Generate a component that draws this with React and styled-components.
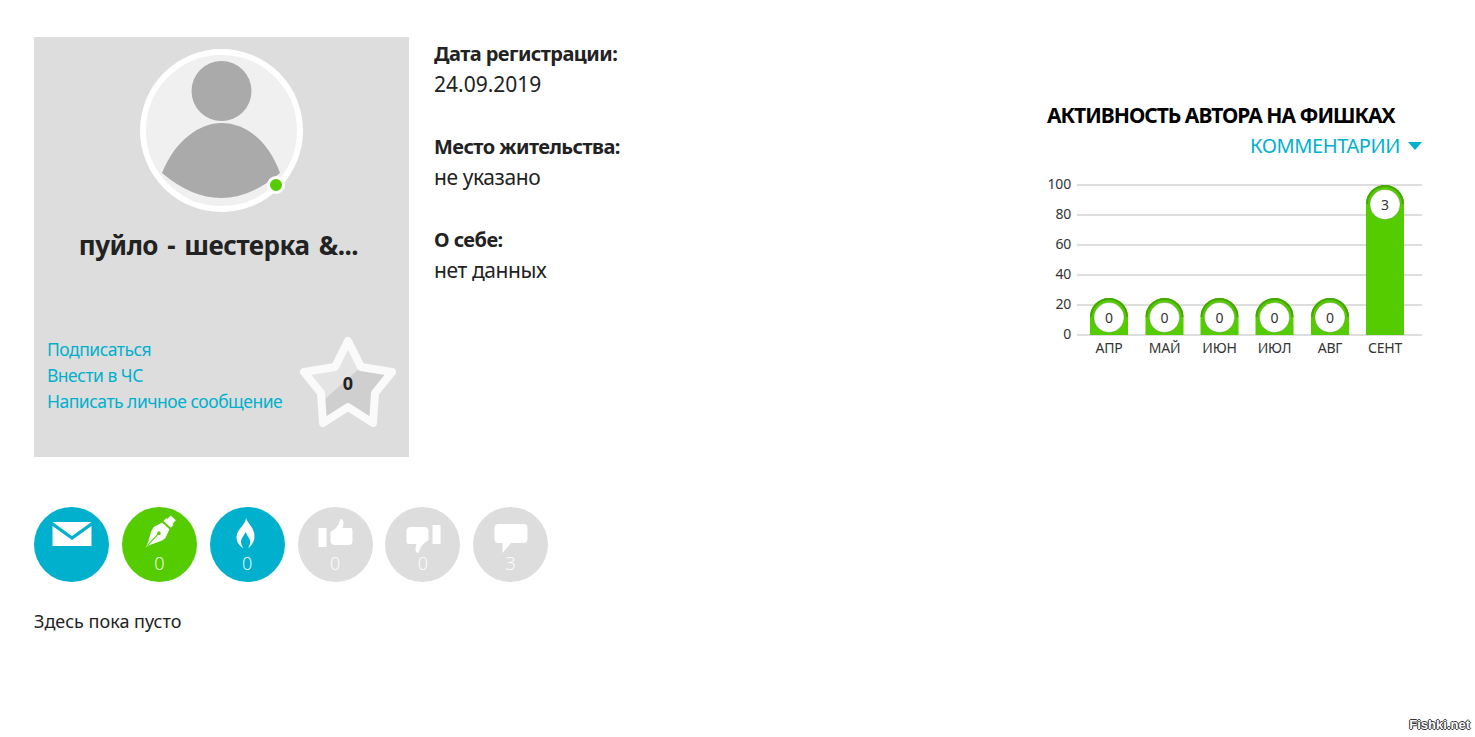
import React from 'react';
import styled, { createGlobalStyle } from 'styled-components';

const GlobalStyle = createGlobalStyle`
  html, body {
    margin: 0;
    padding: 0;
    background: #fff;
    overflow: hidden;
  }
  body {
    font-family: 'Noto Sans', 'Open Sans', sans-serif;
    color: #222;
  }
`;

const Page = styled.div`
  position: relative;
  box-sizing: border-box;
  height: 737px;
  padding: 37px 53px 0 34px;
`;

const TopRow = styled.div`
  display: flex;
  align-items: flex-start;
`;

const ProfileCard = styled.div`
  box-sizing: border-box;
  width: 375px;
  height: 420px;
  padding: 12px 13px 0;
  background: #ddd;
  display: flex;
  flex-direction: column;
  align-items: center;
`;

const Avatar = styled.div`
  position: relative;
  width: 163px;
  height: 163px;
  svg {
    display: block;
  }
`;

const OnlineDot = styled.span`
  position: absolute;
  right: 18px;
  bottom: 18px;
  width: 12px;
  height: 12px;
  border-radius: 50%;
  background: #55cc00;
  border: 3px solid #fff;
`;

const UserName = styled.h1`
  margin: 15px 6px 0 0;
  font-size: 26px;
  line-height: 36px;
  font-weight: 700;
  letter-spacing: -0.5px;
  word-spacing: 3px;
  color: #222;
  white-space: nowrap;
`;

const CardFooter = styled.div`
  align-self: stretch;
  margin-top: 57px;
  display: flex;
  justify-content: space-between;
`;

const LinkList = styled.div`
  display: flex;
  flex-direction: column;
  padding-top: 16px;
`;

const ProfileLink = styled.a`
  font-size: 17.5px;
  line-height: 26px;
  letter-spacing: -0.5px;
  color: #00b0cc;
  text-decoration: none;
  white-space: nowrap;
`;

const Rating = styled.div`
  position: relative;
  width: 100px;
  height: 96px;
  margin: 15px -2px 0 0;
  svg {
    display: block;
  }
`;

const RatingValue = styled.span`
  position: absolute;
  left: 0;
  right: 0;
  top: 36px;
  text-align: center;
  font-size: 18px;
  line-height: 24px;
  font-weight: 700;
  color: #222;
`;

const InfoColumn = styled.div`
  margin-left: 25px;
  padding-top: 1px;
`;

const InfoBlock = styled.div`
  margin-bottom: 31px;
`;

const InfoLabel = styled.div`
  font-size: 20px;
  line-height: 31px;
  font-weight: 700;
  letter-spacing: -0.55px;
  color: #222;
`;

const InfoValue = styled.div`
  font-size: 21px;
  line-height: 31px;
  letter-spacing: ${p => p.$spacing || '-0.4px'};
  color: #222;
`;

const Activity = styled.div`
  margin-left: auto;
  margin-top: 63px;
  width: 375px;
`;

const ActivityTitle = styled.h2`
  margin: 0;
  font-size: 21px;
  line-height: 30px;
  font-weight: 700;
  letter-spacing: -1px;
  color: #000;
  white-space: nowrap;
`;

const ChartSwitch = styled.div`
  display: flex;
  justify-content: flex-end;
  align-items: center;
  gap: 8px;
  height: 30px;
  font-size: 20px;
  letter-spacing: -0.4px;
  color: #00b0cc;
`;

const Caret = styled.span`
  width: 0;
  height: 0;
  border-left: 7px solid transparent;
  border-right: 7px solid transparent;
  border-top: 8px solid #00b0cc;
  margin-top: 2px;
`;

const ChartSvg = styled.svg`
  display: block;
  margin-top: 15px;
  text {
    font-family: 'Noto Sans', sans-serif;
    font-size: 14px;
    fill: #333;
    letter-spacing: -0.2px;
  }
`;

const Badges = styled.div`
  display: flex;
  gap: 12.85px;
  margin-top: 50px;
`;

const Badge = styled.div`
  box-sizing: border-box;
  width: 75px;
  height: 75px;
  padding-top: 8px;
  border-radius: 50%;
  background: ${p => p.$bg};
  display: flex;
  flex-direction: column;
  align-items: center;
  color: #fff;
  svg {
    display: block;
    flex: none;
  }
`;

const BadgeCount = styled.span`
  font-family: 'Open Sans', sans-serif;
  font-weight: 300;
  font-size: 18px;
  line-height: 20px;
`;

const EmptyNote = styled.p`
  margin: 26px 0 0;
  font-size: 18px;
  line-height: 26px;
  color: #222;
`;

const Watermark = styled.div`
  position: absolute;
  right: 5px;
  bottom: 5px;
  font-family: 'Liberation Sans', sans-serif;
  font-size: 13px;
  line-height: 14px;
  font-weight: 700;
  color: #fff;
  text-shadow: 1px 0 0 #333, -1px 0 0 #333, 0 1px 0 #333, 0 -1px 0 #333;
`;

const TEAL = '#00b0cc';
const GREEN = '#55cc00';
const GREY = '#ddd';

const STAR = '348,341 361,367 392,372 375,393 373,423 348,407 323,423 321,393 304,372 335,367';

const BadgeIcon = ({ children, bg }) => (
  <svg width="40" height="38" viewBox="-20 0 40 38" fill="#fff" style={{ color: bg }}>
    {children}
  </svg>
);

const badges = [
  {
    bg: TEAL,
    icon: (
      <>
        <path d="M-19.5 7H19.5L0 21Z" />
        <path d="M-19.5 11L0 25L19.5 11V31H-19.5Z" />
      </>
    ),
  },
  {
    bg: GREEN,
    count: 0,
    icon: (
      <g transform="translate(2 16) rotate(43)">
        <path d="M0 22C-1 16 -8 8 -8 2L-5 -7H5L8 2C8 8 1 16 0 22Z" />
        <path d="M-5 -9H5V-13H3.5V-18H-3.5V-13H-5Z" />
        <path d="M0 20V4" stroke="currentColor" strokeWidth="1" />
        <circle cx="0" cy="3" r="1.8" fill="currentColor" />
      </g>
    ),
  },
  {
    bg: TEAL,
    count: 0,
    icon: (
      <path d="M-1 3C1 9 7.5 13 7.5 21C7.5 27 4 31 1 33C3 30 4 27 2.5 24C1.5 22 0 20 -1.5 17C-2.5 20 -6 23 -6 27C-6 29 -5 31 -3.5 33C-7.5 31 -10.5 27 -10.5 22C-10.5 14 -1 10 -1 3Z" />
    ),
  },
  {
    bg: GREY,
    count: 0,
    icon: (
      <>
        <rect x="-16.5" y="13" width="8" height="19" />
        <path d="M-4.5 17C-1.5 15 1.5 13 3.5 9L5.5 4C8.5 4 8.5 7 8.5 9L7.5 13H15.5C17.5 13 17.5 15 17.5 17V26C17.5 29 15.5 30 13.5 30H0.5C-2.5 30 -4.5 29 -4.5 26Z" />
      </>
    ),
  },
  {
    bg: GREY,
    count: 0,
    icon: (
      <g transform="rotate(180 0.5 21)">
        <rect x="-16.5" y="13" width="8" height="19" />
        <path d="M-4.5 17C-1.5 15 1.5 13 3.5 9L5.5 4C8.5 4 8.5 7 8.5 9L7.5 13H15.5C17.5 13 17.5 15 17.5 17V26C17.5 29 15.5 30 13.5 30H0.5C-2.5 30 -4.5 29 -4.5 26Z" />
      </g>
    ),
  },
  {
    bg: GREY,
    count: 3,
    icon: (
      <path d="M-12.5 9H12.5C15 9 16.5 10.5 16.5 13V24C16.5 26.5 15 28 12.5 28H0L-8.5 38V28H-12.5C-15 28 -16.5 26.5 -16.5 24V13C-16.5 10.5 -15 9 -12.5 9Z" />
    ),
  },
];

// chart coordinates are relative to the svg: x = page x - 1047, y = page y - 175
const gridLines = [100, 80, 60, 40, 20, 0];
const months = [
  { label: 'АПР', x: 62, value: 0 },
  { label: 'МАЙ', x: 117.5, value: 0 },
  { label: 'ИЮН', x: 172.5, value: 0 },
  { label: 'ИЮЛ', x: 227.5, value: 0 },
  { label: 'АВГ', x: 283, value: 0 },
  { label: 'СЕНТ', x: 338, value: 3, top: 10 },
];

const Bar = ({ x, value, top = 123 }) => (
  <g>
    <path d={`M${x - 19} 160V${top + 19}A19 19 0 0 1 ${x + 19} ${top + 19}V160Z`} fill={GREEN} />
    <path
      d={`M${x - 18} ${top + 19}A18 18 0 0 1 ${x + 18} ${top + 19}`}
      fill="none"
      stroke="#46a600"
      strokeWidth="2"
    />
    <circle cx={x} cy={top + 19.5} r="15" fill="#fff" stroke="rgba(0,0,0,0.15)" strokeWidth="1" />
    <text x={x} y={top + 24.5} textAnchor="middle">
      {value}
    </text>
  </g>
);

const ActivityChart = () => (
  <ChartSvg width="375" height="185" viewBox="0 0 375 185">
    {gridLines.map((v, i) => (
      <g key={v}>
        <rect x="30" y={9 + i * 30} width="345" height="2" fill="#ddd" />
        <text x="24" y={14 + i * 30} textAnchor="end">
          {v}
        </text>
      </g>
    ))}
    {months.map(m => (
      <g key={m.label}>
        <Bar x={m.x} value={m.value} top={m.top} />
        <text x={m.x} y={178} textAnchor="middle">
          {m.label}
        </text>
      </g>
    ))}
  </ChartSvg>
);

export default function App() {
  return (
    <Page>
      <GlobalStyle />
      <TopRow>
        <ProfileCard>
          <Avatar>
            <svg width="163" height="163" viewBox="0 0 163 163">
              <circle cx="81.5" cy="81.5" r="78.5" fill="#f0f0f0" stroke="#fff" strokeWidth="6" />
              <circle cx="81.5" cy="42" r="30" fill="#aaa" />
              <path d="M22 124C35 91 60 74 81.5 74C105 74 128 91 140 124Q81 174 22 124Z" fill="#aaa" />
            </svg>
            <OnlineDot />
          </Avatar>
          <UserName>пуйло - шестерка &amp;...</UserName>
          <CardFooter>
            <LinkList>
              <ProfileLink href="#">Подписаться</ProfileLink>
              <ProfileLink href="#">Внести в ЧС</ProfileLink>
              <ProfileLink href="#">Написать личное сообщение</ProfileLink>
            </LinkList>
            <Rating>
              <svg width="100" height="96" viewBox="298 335 100 96">
                <polygon points={STAR} fill="#e4e4e4" />
                <polygon points="361,367 392,372 375,393 373,423 348,407 323,423 321.6,402" fill="#cfcfcf" />
                <polygon points={STAR} fill="none" stroke="#fafafa" strokeWidth="8" strokeLinejoin="round" />
              </svg>
              <RatingValue>0</RatingValue>
            </Rating>
          </CardFooter>
        </ProfileCard>
        <InfoColumn>
          <InfoBlock>
            <InfoLabel>Дата регистрации:</InfoLabel>
            <InfoValue $spacing="0">24.09.2019</InfoValue>
          </InfoBlock>
          <InfoBlock>
            <InfoLabel>Место жительства:</InfoLabel>
            <InfoValue>не указано</InfoValue>
          </InfoBlock>
          <InfoBlock>
            <InfoLabel>О себе:</InfoLabel>
            <InfoValue>нет данных</InfoValue>
          </InfoBlock>
        </InfoColumn>
        <Activity>
          <ActivityTitle>АКТИВНОСТЬ АВТОРА НА ФИШКАХ</ActivityTitle>
          <ChartSwitch>
            КОММЕНТАРИИ
            <Caret />
          </ChartSwitch>
          <ActivityChart />
        </Activity>
      </TopRow>
      <Badges>
        {badges.map((b, i) => (
          <Badge key={i} $bg={b.bg}>
            <BadgeIcon bg={b.bg}>{b.icon}</BadgeIcon>
            {b.count !== undefined && <BadgeCount>{b.count}</BadgeCount>}
          </Badge>
        ))}
      </Badges>
      <EmptyNote>Здесь пока пусто</EmptyNote>
      <Watermark>Fishki.net</Watermark>
    </Page>
  );
}
